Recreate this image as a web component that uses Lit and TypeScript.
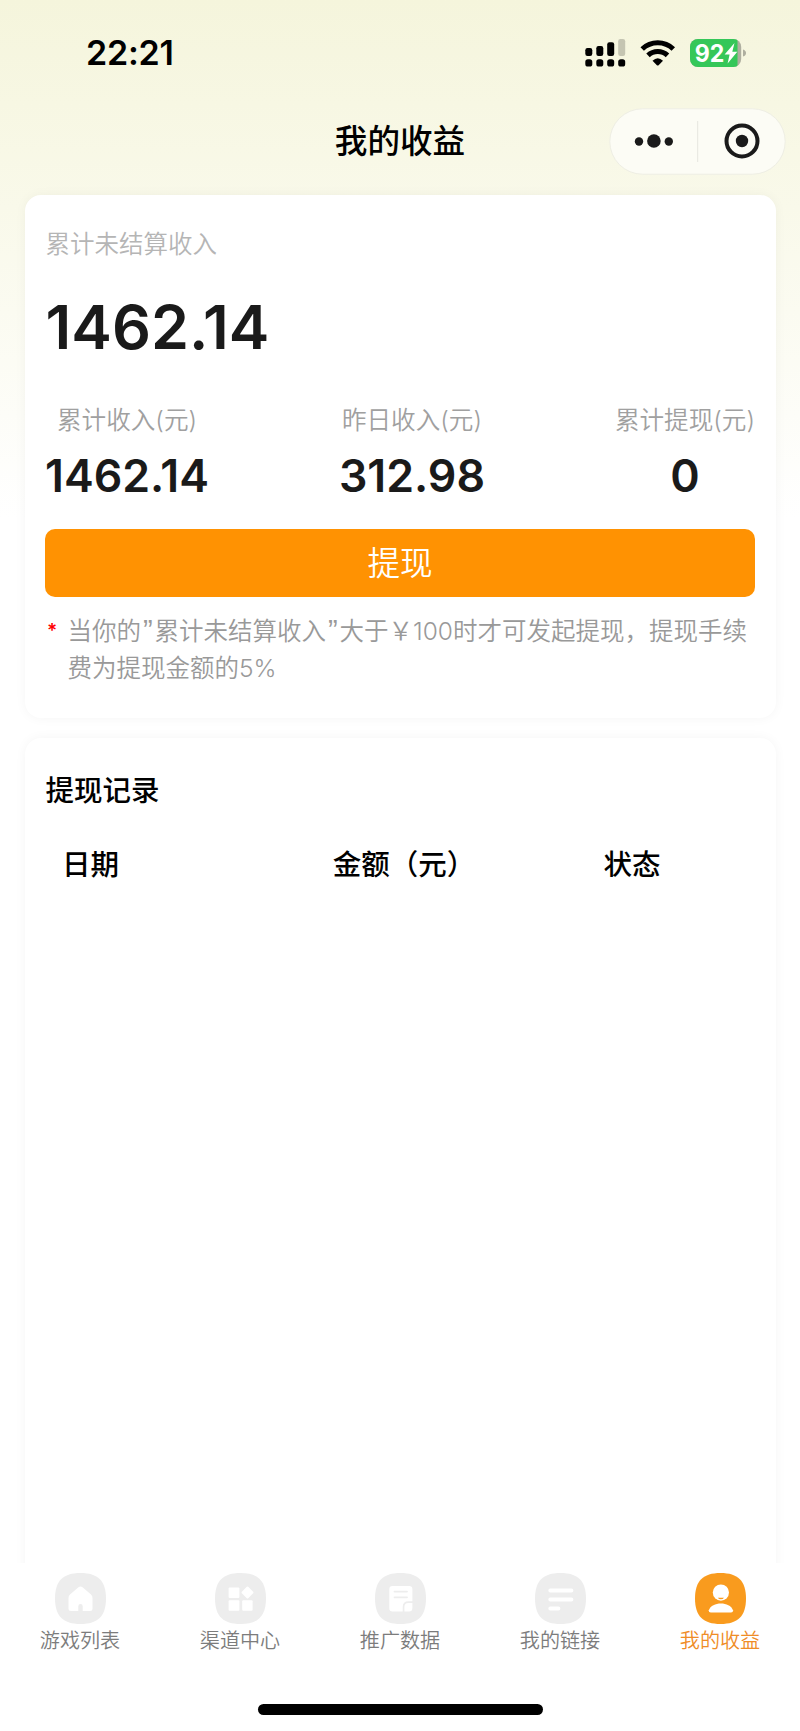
import { LitElement, html, css, svg } from "lit";
import { customElement, property } from "lit/decorators.js";

const blob = "M25.5 0C43 0 51 8 51 25.5S43 51 25.5 51 0 43 0 25.5 8 0 25.5 0Z";

const glyphs: Record<string, unknown> = {
  home: svg`<path fill="#fff" d="M23.2 14.4Q25.5 12.4 27.8 14.4L36 21.6Q37.5 23 37.5 25V35.5Q37.5 38 35 38H27.7V33.2A2.2 2.2 0 0 0 23.3 33.2V38H16Q13.5 38 13.5 35.5V25Q13.5 23 15 21.6Z"/>`,
  grid: svg`<g fill="#fff"><rect x="13.6" y="14.5" width="10.8" height="10.4" rx="1"/><rect x="13.6" y="27.3" width="10.8" height="10.5" rx="1"/><rect x="27.2" y="27.3" width="10.4" height="10.5" rx="1"/><rect x="28" y="15" width="9" height="9" rx="1" transform="rotate(45 32.5 19.5)"/></g>`,
  note: svg`<path fill="#fff" d="M17.5 12.9H34.2Q37.4 12.9 37.4 16V28.3H33.5Q27.7 28.3 27.7 34V38.5H17.5Q14.3 38.5 14.3 35.5V16Q14.3 12.9 17.5 12.9Z"/><path fill="#fff" d="M37.4 30V35Q37.4 38.5 34 38.5H29.4V34Q29.4 30 33.4 30Z"/><path d="M19.5 18.6H32M19.5 24.3H32" stroke="#ededed" stroke-width="1.8" stroke-linecap="round"/>`,
  lines: svg`<path d="M15.3 17.6H36.4M15.3 26.5H36.4M15.3 35.5H23.4" stroke="#fff" stroke-width="4" stroke-linecap="round"/>`,
  user: svg`<circle cx="25.9" cy="19.6" r="8.1" fill="#fff"/><path d="M22.8 24.7H29Q28 26.3 25.9 26.3T22.8 24.7Z" fill="#f99b1e"/><path fill="#fff" d="M13.8 37.3C15.5 32.5 20.5 30.4 25.9 30.4S36.3 32.5 38 37.3Q38.3 39.6 36 39.6H15.8Q13.5 39.6 13.8 37.3Z"/>`,
};

@customElement("tab-item")
class TabItem extends LitElement {
  @property() icon = "home";
  @property() label = "";
  @property({ type: Boolean, reflect: true }) active = false;

  static styles = css`
    :host {
      flex: 1;
      display: flex;
      flex-direction: column;
      align-items: center;
      color: #7c7c7c;
    }
    :host([active]) {
      color: #ef8c26;
    }
    .icon {
      width: 51px;
      height: 51px;
      display: block;
    }
    .label {
      font-size: 20.1px;
      line-height: 32px;
      margin-top: 1px;
      white-space: nowrap;
    }
  `;

  render() {
    return html`
      <svg class="icon" viewBox="0 0 51 51">
        <path d=${blob} fill=${this.active ? "#f99b1e" : "#ededed"} />
        ${glyphs[this.icon]}
      </svg>
      <span class="label">${this.label}</span>
    `;
  }
}

@customElement("app-root")
class AppRoot extends LitElement {
  static styles = css`
    :host {
      display: flex;
      flex-direction: column;
      box-sizing: border-box;
      height: 1731px;
      overflow: hidden;
      color: #000;
      font-family: Inter, "Noto Sans CJK SC", sans-serif;
      font-weight: 350;
      background: linear-gradient(#f5f5dc, #fff 519px);
    }
    svg {
      display: block;
    }
    .status {
      height: 106px;
      box-sizing: border-box;
      padding: 0 54px 0 86px;
      display: flex;
      justify-content: space-between;
      align-items: center;
      flex: none;
    }
    .time {
      font-size: 34px;
      font-weight: 600;
      line-height: 40px;
      letter-spacing: -0.2px;
    }
    .nav {
      height: 70px;
      flex: none;
      display: grid;
      grid-template-columns: 1fr auto 1fr;
      align-items: center;
      padding: 0 14px;
    }
    .title {
      grid-column: 2;
      font-size: 32.6px;
      line-height: 40px;
      font-weight: 500;
    }
    .capsule {
      justify-self: end;
    }
    .body {
      flex: 1;
      min-height: 0;
      overflow: hidden;
      display: flex;
      flex-direction: column;
      gap: 20px;
      padding: 19px 24.5px 0;
    }
    .card {
      background: #fff;
      border-radius: 16px;
      box-shadow: 0 0 12px rgba(0, 0, 0, 0.045);
      padding: 0 20.5px;
      box-sizing: border-box;
      flex: none;
    }
    .summary {
      height: 523px;
      padding-top: 31px;
    }
    .caption {
      font-size: 24.5px;
      line-height: 36px;
      padding-left: 0.5px;
      color: #b5b5b5;
    }
    .total {
      font-size: 61px;
      line-height: 70px;
      margin-top: 30px;
      padding-left: 0.5px;
      font-weight: 600;
      color: #1a1a1a;
    }
    .stats {
      display: flex;
      justify-content: space-between;
      margin-top: 40px;
    }
    .stat {
      display: flex;
      flex-direction: column;
      align-items: center;
    }
    .name {
      font-size: 24.6px;
      line-height: 36px;
      color: #a0a0a0;
    }
    .value {
      font-size: 44.7px;
      line-height: 54px;
      margin-top: 11px;
      font-weight: 600;
      color: #1a1a1a;
    }
    .withdraw {
      display: block;
      width: 100%;
      height: 68px;
      margin-top: 26px;
      padding: 0;
      border: 0;
      border-radius: 10px;
      background: #ff9202;
      color: #fff;
      font: inherit;
      font-size: 32.6px;
      line-height: 64px;
    }
    .hint {
      display: flex;
      margin-top: 16px;
      font-size: 24.5px;
      line-height: 36.8px;
      color: #999;
    }
    .star {
      width: 20.5px;
      padding-left: 2px;
      flex: none;
      font-size: 19px;
      line-height: 36px;
      font-weight: 600;
      color: #f00;
    }
    .line {
      display: flex;
      align-items: baseline;
      white-space: nowrap;
      height: 36.8px;
    }
    .quote {
      width: 13.5px;
      text-align: center;
      font-family: "Liberation Sans", sans-serif;
      font-size: 29px;
      line-height: 30px;
    }
    .records {
      height: 900px;
      padding-top: 33px;
    }
    .heading {
      font-size: 28.5px;
      line-height: 40px;
      padding-left: 0.5px;
      font-weight: 500;
    }
    .columns {
      display: grid;
      grid-template-columns: repeat(3, 270.7px);
      padding-left: 17px;
      margin-top: 34px;
      font-size: 28.5px;
      line-height: 40px;
      font-weight: 500;
    }
    .tabs {
      height: 141px;
      flex: none;
      display: flex;
      padding-top: 9.5px;
      box-sizing: border-box;
      background: #fff;
    }
    .home-bar {
      height: 27px;
      flex: none;
      background: #fff;
      display: flex;
      justify-content: center;
      align-items: flex-start;
    }
    .pill {
      width: 285px;
      height: 10.5px;
      border-radius: 6px;
      background: #000;
    }
    .battery-text {
      font-size: 24px;
      font-weight: 700;
    }
  `;

  private statusIcons() {
    return html`<svg width="161" height="28" viewBox="0 0 161 28">
      <rect x="0.3" y="9" width="7" height="8" rx="2.2" />
      <rect x="11.3" y="7" width="7" height="10" rx="2.2" />
      <rect x="22.2" y="3.3" width="7" height="13.7" rx="2.2" />
      <rect x="33.2" y="0" width="7" height="17" rx="2.2" fill="#c5c5b2" />
      <rect x="0.3" y="20.2" width="7" height="7.4" rx="2.6" />
      <rect x="11.3" y="20.2" width="7" height="7.4" rx="2.6" />
      <rect x="22.2" y="20.2" width="7" height="7.4" rx="2.6" />
      <rect x="33.2" y="20.2" width="7" height="7.4" rx="2.6" />
      <g fill="none" stroke="#000" stroke-width="5">
        <path d="M57.2 10A22.5 22.5 0 0 1 88.3 10" />
        <path d="M63 16.4A14 14 0 0 1 82.5 16.4" />
      </g>
      <path d="M67.5 21.7Q72.7 16.6 78 21.7L73.6 26.2Q72.7 27 71.9 26.2Z" />
      <clipPath id="b"><rect x="105" y="0" width="51.2" height="28" rx="8" /></clipPath>
      <g clip-path="url(#b)">
        <rect x="105" width="52" height="28" fill="#aeae9f" />
        <rect x="105" width="47.5" height="28" fill="#35c759" />
      </g>
      <path d="M158 10.5Q161 11.5 161 14T158 17.5Z" fill="#aeae9f" />
      <text class="battery-text" x="109.8" y="22.8" fill="#fff" textLength="29.6" lengthAdjust="spacingAndGlyphs">92</text>
      <path fill="#fff" d="M149.5 4L139.6 15.4H144.6L142.6 24.5L152.3 12.8H147.3Z" />
    </svg>`;
  }

  render() {
    const stats = [
      ["累计收入(元)", "1462.14"],
      ["昨日收入(元)", "312.98"],
      ["累计提现(元)", "0"],
    ];
    const tabs = [
      ["home", "游戏列表"],
      ["grid", "渠道中心"],
      ["note", "推广数据"],
      ["lines", "我的链接"],
      ["user", "我的收益"],
    ];
    return html`
      <div class="status"><span class="time">22:21</span>${this.statusIcons()}</div>
      <div class="nav">
        <span class="title">我的收益</span>
        <svg class="capsule" width="177" height="67" viewBox="0 0 177 67">
          <rect x="0.8" y="0.8" width="175.4" height="65.4" rx="32.7" fill="#fcfcf5" stroke="#eeeee4" />
          <path d="M88.7 13V54" stroke="#e6e6df" />
          <g fill="#1a1a1a">
            <circle cx="30" cy="33.5" r="4.2" />
            <circle cx="44.9" cy="33" r="6.8" />
            <circle cx="59.8" cy="33.5" r="4.2" />
            <circle cx="133" cy="33" r="6.2" />
          </g>
          <circle cx="133" cy="33" r="15.5" fill="none" stroke="#1a1a1a" stroke-width="4" />
        </svg>
      </div>
      <div class="body">
        <section class="card summary">
          <div class="caption">累计未结算收入</div>
          <div class="total">1462.14</div>
          <div class="stats">
            ${stats.map(([n, v]) => html`<div class="stat"><span class="name">${n}</span><span class="value">${v}</span></div>`)}
          </div>
          <button class="withdraw">提现</button>
          <div class="hint">
            <span class="star">*</span>
            <div>
              <div class="line"><span>当你的</span><span class="quote">”</span><span>累计未结算收入</span><span class="quote">”</span><span>大于￥100时才可发起提现，提现手续</span></div>
              <div class="line"><span>费为提现金额的5%</span></div>
            </div>
          </div>
        </section>
        <section class="card records">
          <div class="heading">提现记录</div>
          <div class="columns"><span>日期</span><span>金额（元）</span><span>状态</span></div>
        </section>
      </div>
      <nav class="tabs">
        ${tabs.map(([i, l]) => html`<tab-item icon=${i} label=${l} ?active=${i === "user"}></tab-item>`)}
      </nav>
      <div class="home-bar"><div class="pill"></div></div>
    `;
  }
}
